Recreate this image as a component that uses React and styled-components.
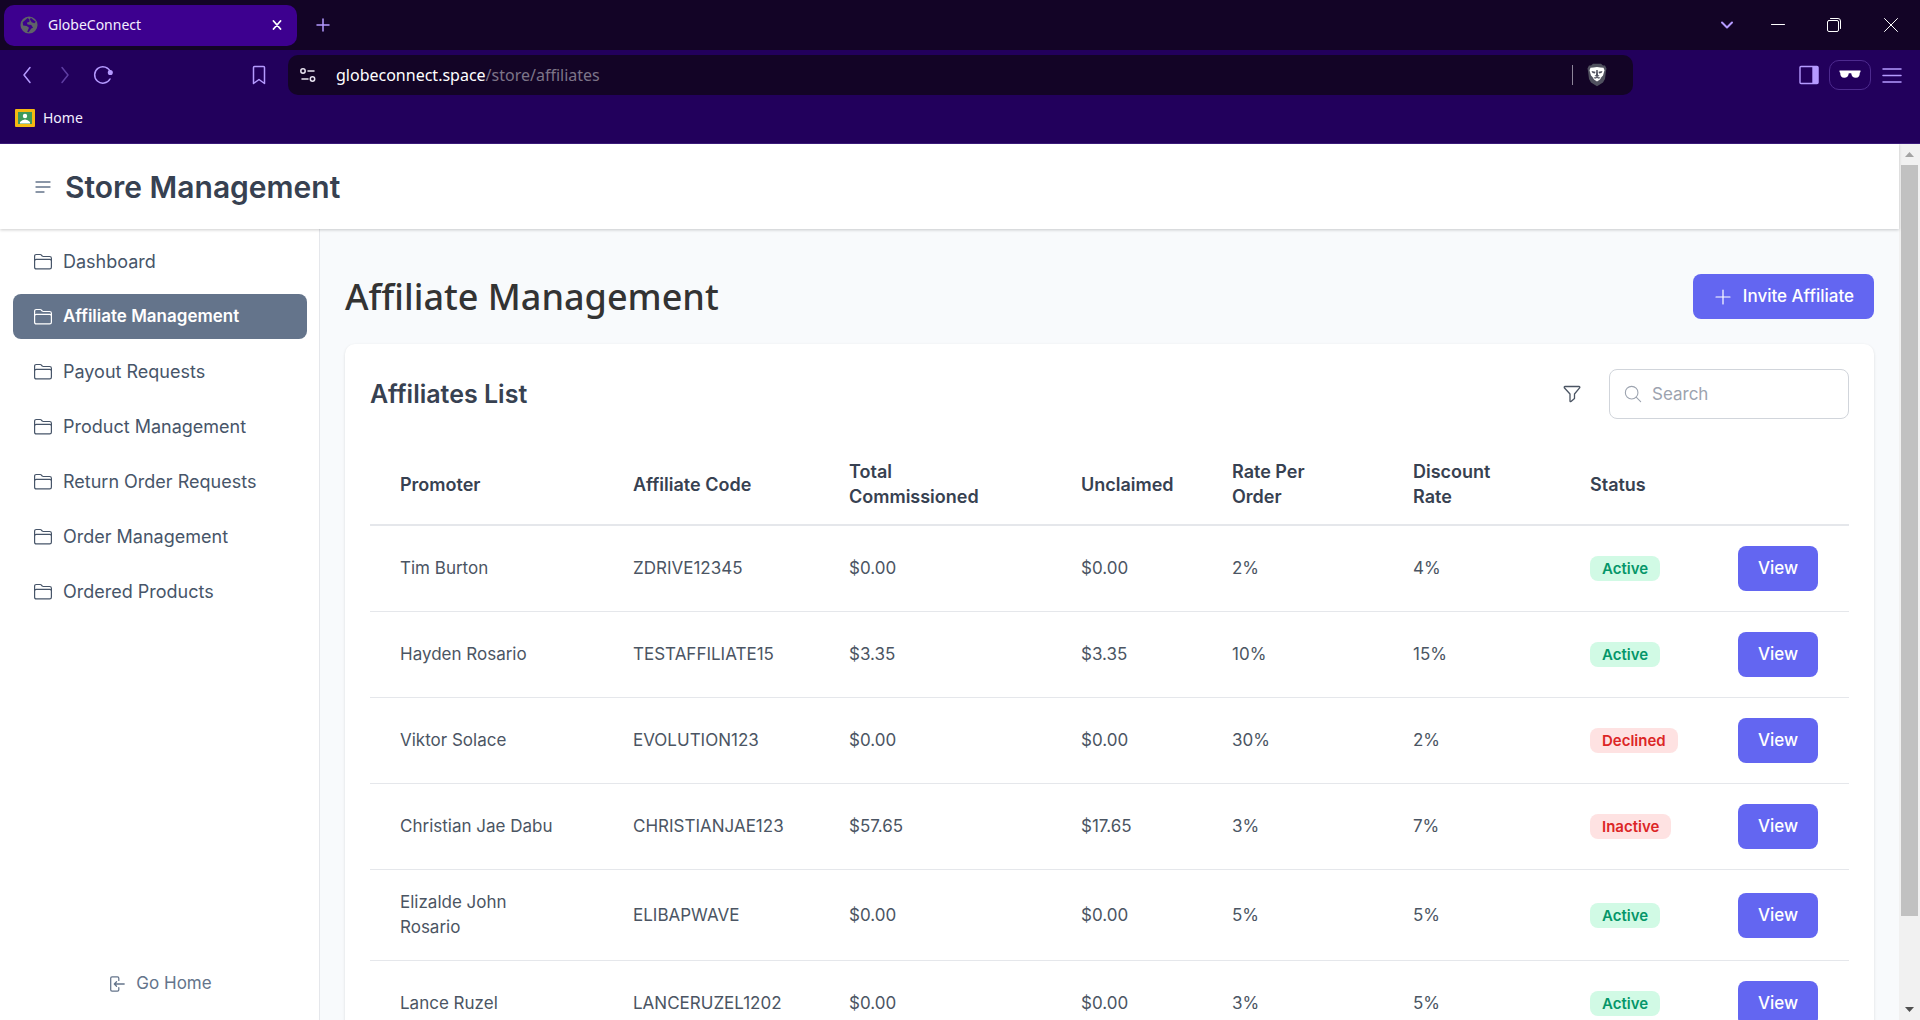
import React from "react";
import styled, { createGlobalStyle, css } from "styled-components";

const GlobalStyle = createGlobalStyle`
  *, *::before, *::after { box-sizing: border-box; }
  body {
    margin: 0;
    font-family: Inter, "Liberation Sans", sans-serif;
    font-size: 17px;
    line-height: 25px;
    color: #4b5563;
  }
  button, input { font: inherit; margin: 0; }
  button { cursor: pointer; }
  h1, h2, ul { margin: 0; padding: 0; }
`;

const Window = styled.div`
  display: flex;
  flex-direction: column;
  height: 100vh;
  overflow: hidden;
`;

const Chrome = styled.header`
  flex: none;
  background: #22005c;
  border-bottom: 1px solid #3c1b7c;
  font-family: "Noto Sans", "Open Sans", sans-serif;
  font-size: 14px;
  line-height: 20px;
  color: #f3eeff;
`;

const TabStrip = styled.div`
  display: flex;
  align-items: center;
  height: 50px;
  padding-left: 4px;
  background: #130426;
`;

const Tab = styled.div`
  display: flex;
  align-items: center;
  gap: 10px;
  width: 293px;
  height: 41px;
  padding: 0 6px 0 16px;
  border-radius: 10px;
  background: #3d008f;
`;

const TabTitle = styled.span`
  flex: 1;
`;

const IconButton = styled.button`
  display: flex;
  align-items: center;
  justify-content: center;
  flex: none;
  width: ${(p) => p.$width || 28}px;
  height: 36px;
  padding: 0;
  border: 0;
  background: none;
  color: ${(p) => p.$color || "#b59aff"};
`;

const Spacer = styled.div`
  flex: 1;
`;

const Toolbar = styled.div`
  display: flex;
  align-items: center;
  height: 50px;
  padding: 0 8px;
`;

const NavButtons = styled.div`
  display: flex;
  flex: none;
  width: 237px;
`;

const AddressBar = styled.div`
  display: flex;
  align-items: center;
  flex: 0 1 1345px;
  height: 40px;
  margin-left: 15px;
  padding: 0 22px 0 4px;
  border-radius: 10px;
  background: #130426;
`;

const UrlText = styled.a`
  flex: 1;
  margin-left: 12px;
  font-size: 16px;
  color: #fff;
  text-decoration: none;

  span { color: #7d7488; }
`;

const Divider = styled.span`
  width: 1px;
  height: 20px;
  margin-right: 10px;
  background: #8d8599;
`;

const ProfileButton = styled(IconButton)`
  width: 42px;
  height: 30px;
  border: 1px solid #4d2a8f;
  border-radius: 10px;
  color: #fff;
`;

const Bookmarks = styled.nav`
  display: flex;
  align-items: center;
  height: 43px;
  padding: 0 15px 8px;
`;

const BookmarkLink = styled.a`
  display: flex;
  align-items: center;
  gap: 8px;
  color: inherit;
  text-decoration: none;
`;

const Viewport = styled.div`
  display: flex;
  flex: 1;
  min-height: 0;
`;

const Page = styled.div`
  display: flex;
  flex-direction: column;
  flex: 1;
  min-width: 0;
`;

const PageHeader = styled.header`
  position: relative;
  z-index: 1;
  display: flex;
  align-items: center;
  flex: none;
  gap: 8px;
  height: 85px;
  padding: 0 29px;
  background: #fff;
  box-shadow: 0 1px 3px rgba(0, 0, 0, 0.2);
`;

const Brand = styled.span`
  font-size: 30px;
  line-height: 40px;
  font-weight: 600;
  color: #374151;
`;

const Body = styled.div`
  display: flex;
  flex: 1;
  min-height: 0;
`;

const Sidebar = styled.nav`
  display: flex;
  flex-direction: column;
  justify-content: space-between;
  flex: none;
  width: 320px;
  padding: 10px 12px 14px 13px;
  border-right: 1px solid #e5e7eb;
  background: #fff;
`;

const NavList = styled.ul`
  display: flex;
  flex-direction: column;
  gap: 10px;
  list-style: none;
`;

const NavLink = styled.a`
  display: flex;
  align-items: center;
  gap: 10px;
  height: 45px;
  padding: 0 20px;
  border-radius: 8px;
  font-size: 18px;
  color: #475569;
  text-decoration: none;

  ${(p) =>
    p.$active &&
    css`
      background: #64748b;
      color: #fff;
      font-size: 17px;
      font-weight: 600;
    `}
`;

const HomeLink = styled(NavLink)`
  justify-content: center;
  font-size: 17px;
  color: #64748b;
`;

const Main = styled.main`
  display: flex;
  flex-direction: column;
  flex: 1;
  min-width: 0;
  gap: 25px;
  padding: 45px 25px 0;
  background: #f8fafc;
  overflow: hidden;
`;

const TitleRow = styled.div`
  display: flex;
  align-items: center;
  justify-content: space-between;
`;

const Title = styled.h1`
  font-family: "Noto Sans", "Open Sans", sans-serif;
  font-size: 36px;
  line-height: 45px;
  font-weight: 500;
  color: #333;
`;

const Button = styled.button`
  display: flex;
  align-items: center;
  justify-content: center;
  gap: 10px;
  height: 45px;
  padding: 0 20px;
  border: 0;
  border-radius: 8px;
  background: #6366f1;
  color: #fff;
  font-weight: 500;
`;

const Card = styled.section`
  flex: none;
  padding: 25px;
  border-radius: 10px;
  background: #fff;
  box-shadow: 0 1px 3px rgba(0, 0, 0, 0.12);
`;

const CardHeader = styled.div`
  display: flex;
  align-items: center;
  margin-bottom: 25px;
`;

const CardTitle = styled.h2`
  flex: 1;
  font-size: 25px;
  line-height: 35px;
  font-weight: 600;
  color: #374151;
`;

const FilterButton = styled(IconButton)`
  margin-right: 23px;
`;

const SearchBox = styled.label`
  display: flex;
  align-items: center;
  gap: 10px;
  width: 240px;
  height: 50px;
  padding: 0 14px;
  border: 1px solid #d1d5db;
  border-radius: 8px;
  color: #9ca3af;
`;

const SearchInput = styled.input`
  flex: 1;
  min-width: 0;
  padding: 0;
  border: 0;
  outline: 0;
  background: none;
  color: #4b5563;

  &::placeholder { color: #9ca3af; opacity: 1; }
`;

const Table = styled.table`
  width: 100%;
  table-layout: fixed;
  border-collapse: separate;
  border-spacing: 0;
  text-align: left;
`;

const Th = styled.th`
  height: 82px;
  padding: 0 30px;
  border-bottom: 2px solid #e5e7eb;
  font-size: 18px;
  font-weight: 600;
  color: #374151;
`;

const Td = styled.td`
  height: 86px;
  padding: 20px 40px 20px 30px;
  border-bottom: 1px solid #e5e7eb;
`;

const Badge = styled.span`
  display: inline-block;
  padding: 0 12px;
  border-radius: 8px;
  font-size: 15px;
  line-height: 25px;
  font-weight: 600;
  background: ${(p) => (p.$good ? "#d1fae5" : "#fee2e2")};
  color: ${(p) => (p.$good ? "#059669" : "#dc2626")};
`;

const ActionTd = styled(Td)`
  padding: 20px 30px;
`;

const Scrollbar = styled.div`
  display: flex;
  flex-direction: column;
  align-items: center;
  flex: none;
  width: 21px;
  background: #f1f1f1;
`;

const ScrollArrow = styled(IconButton)`
  width: 21px;
  height: 21px;
`;

const ScrollTrack = styled.div`
  flex: 1;
  width: 17px;
`;

const ScrollThumb = styled.div`
  height: 90%;
  background: #c1c1c1;
`;

const Glyph = styled.svg`
  flex: none;
  fill: none;
  stroke: currentColor;
  stroke-linecap: round;
  stroke-linejoin: round;
`;

function Icon({ size = 20, box = 20, stroke = 1.5, children }) {
  return (
    <Glyph
      width={size}
      height={size}
      viewBox={`0 0 ${box} ${box}`}
      strokeWidth={stroke}
      aria-hidden="true"
    >
      {children}
    </Glyph>
  );
}

const FolderIcon = () => (
  <Icon stroke={1.2}>
    <path d="M1.600 15.200V4.200q0-1.700 1.700-1.700h3.900q.7 0 1.100.5l.9 1q.4.500 1.100.500h6.300q1.800 0 1.800 1.800v8.900q0 1.700-1.700 1.700H3.300q-1.700 0-1.700-1.700zM1.700 8.600q.2-1.200 1.500-1.200h13.600q1.400 0 1.500 1.200" />
  </Icon>
);

const columns = [
  ["Promoter", 233],
  ["Affiliate Code", 216],
  ["Total Commissioned", 232],
  ["Unclaimed", 151],
  ["Rate Per Order", 181],
  ["Discount Rate", 177],
  ["Status", 148],
  ["", 141],
];

const affiliates = [
  ["Tim Burton", "ZDRIVE12345", "$0.00", "$0.00", "2%", "4%", "Active"],
  ["Hayden Rosario", "TESTAFFILIATE15", "$3.35", "$3.35", "10%", "15%", "Active"],
  ["Viktor Solace", "EVOLUTION123", "$0.00", "$0.00", "30%", "2%", "Declined"],
  ["Christian Jae Dabu", "CHRISTIANJAE123", "$57.65", "$17.65", "3%", "7%", "Inactive"],
  ["Elizalde John Rosario", "ELIBAPWAVE", "$0.00", "$0.00", "5%", "5%", "Active"],
  ["Lance Ruzel", "LANCERUZEL1202", "$0.00", "$0.00", "3%", "5%", "Active"],
];

const navItems = [
  "Dashboard",
  "Affiliate Management",
  "Payout Requests",
  "Product Management",
  "Return Order Requests",
  "Order Management",
  "Ordered Products",
];

function BrowserChrome() {
  return (
    <Chrome>
      <TabStrip>
        <Tab>
          <Icon size={18} stroke={0}>
            <circle cx="10" cy="10" r="9.5" fill="#5f6368" />
            <path d="M8.500 2.200 3 7l.5 3.500 4 .5 2.500 2-2 4.500 1.500.5 3-4 2-1-2-3-4-.5-1-2 3-1V4zM12 2l-1 2 2 3 3 1 1.500-1.500z" fill="#3d008f" />
          </Icon>
          <TabTitle>GlobeConnect</TabTitle>
          <IconButton aria-label="Close tab" $color="#fff">
            <Icon size={10} box={10} stroke={1.8}><path d="M1.500 1l7 8M8.500 1l-7 8" /></Icon>
          </IconButton>
        </Tab>
        <IconButton aria-label="New tab" $width={52}>
          <Icon size={14} box={14}><path d="M7 1v12M1 7h12" /></Icon>
        </IconButton>
        <Spacer />
        <IconButton aria-label="Search tabs" $width={46}>
          <Icon size={14} box={14} stroke={2}><path d="M2 4.500l5 5 5-5" /></Icon>
        </IconButton>
        <IconButton aria-label="Minimize" $width={56} $color="#fff">
          <Icon size={14} box={14} stroke={1}><path d="M.5 6.500h13" /></Icon>
        </IconButton>
        <IconButton aria-label="Restore" $width={56} $color="#fff">
          <Icon size={14} box={14} stroke={1}><path d="M3.500.5H11q2.500 0 2.500 2.500v7.500" /><rect x=".5" y="2.500" width="11" height="11" rx="1.500" /></Icon>
        </IconButton>
        <IconButton aria-label="Close window" $width={58} $color="#fff">
          <Icon size={14} box={14} stroke={1}><path d="M.5.5l13 13M13.500.5l-13 13" /></Icon>
        </IconButton>
      </TabStrip>
      <Toolbar>
        <NavButtons>
          <IconButton aria-label="Back" $width={38}>
            <Icon><path d="M13 2.500 7 10l6 7.500" /></Icon>
          </IconButton>
          <IconButton aria-label="Forward" $width={38} $color="#5e3da3">
            <Icon><path d="M7 2.500 13 10l-6 7.500" /></Icon>
          </IconButton>
          <IconButton aria-label="Reload" $width={38}>
            <Icon><path d="M17.500 7A8.200 8.200 0 1 0 17 14" /><circle cx="17.300" cy="7.500" r="1.800" fill="currentColor" /></Icon>
          </IconButton>
        </NavButtons>
        <IconButton aria-label="Bookmark this page">
          <Icon><path d="M4.500 2.500q0-1 1-1h9q1 0 1 1v16L10 14.500l-5.500 4z" /></Icon>
        </IconButton>
        <AddressBar>
          <IconButton aria-label="Site information" $width={32} $color="#e8e3f0">
            <Icon><circle cx="5" cy="6" r="2.200" /><path d="M10 6h6M4 14h6" /><circle cx="14.500" cy="14" r="2.200" /></Icon>
          </IconButton>
          <UrlText href="#">globeconnect.space<span>/store/affiliates</span></UrlText>
          <Divider />
          <IconButton aria-label="Shields" $color="#fff">
            <Icon size={24} box={24} stroke={0}>
              <path d="M8 .8h8l2 1.700h2l1.500 3L21 8l-1 8-2 3.500-6 3.700-6-3.700L4 16 3 8l-.5-2.500L4 2.500h2z" fill="#50515f" />
              <path d="M8.500 4.500 12 4l3.500.5 3 .2 1 2.600-1.500 5.200-1.500 1.500-1.500 2.500-3 2-3-2L7.500 14 6 12.500 4.500 7.300l1-2.600z" fill="#fff" />
              <path d="M6.500 8l4 .8-.5 1.700-2.500-.5zM17.500 8l-4 .8.5 1.700 2.500-.5zM11.300 7h1.400l.3 5 1.500.8-2.500 1.200-2.500-1.200 1.500-.8zM8.500 14.500 12 14l3.500.5-1.500 1.300-2-.8-2 .8z" fill="#50515f" />
            </Icon>
          </IconButton>
        </AddressBar>
        <Spacer />
        <IconButton aria-label="Toggle sidebar" $width={40}>
          <Icon stroke={1.4}><rect x="1" y="1.500" width="18" height="17" rx="1" /><path d="M14 2h4.500v16H14z" fill="currentColor" /></Icon>
        </IconButton>
        <ProfileButton aria-label="Private profile">
          <Icon size={22} box={22} stroke={0}>
            <path d="M.5 6.500h21v1.500l-.7.7q0 5-4 5-4 0-4.600-4.500h-2.400Q9.200 13.700 5.200 13.700q-4 0-4-5L.5 8z" fill="#fff" />
          </Icon>
        </ProfileButton>
        <IconButton aria-label="Menu" $width={41}>
          <Icon><path d="M1 4h18M1 10.500h18M1 17h18" /></Icon>
        </IconButton>
      </Toolbar>
      <Bookmarks>
        <BookmarkLink href="#">
          <Icon size={20} stroke={0}>
            <rect y="1" width="20" height="18" rx="1" fill="#f4b912" />
            <rect x="3" y="4" width="14" height="12" fill="#3f9a5b" />
            <circle cx="10" cy="8" r="2.200" fill="#fff" />
            <path d="M5 15.500V14q2-2.500 5-2.500t5 2.500v1.500z" fill="#fff" />
          </Icon>
          Home
        </BookmarkLink>
      </Bookmarks>
    </Chrome>
  );
}

export default function App() {
  return (
    <Window>
      <GlobalStyle />
      <BrowserChrome />
      <Viewport>
        <Page>
          <PageHeader>
            <IconButton aria-label="Toggle menu" $color="#64748b">
              <Icon stroke={1.3}><path d="M3 5h14M3 10h14M3 15h8" /></Icon>
            </IconButton>
            <Brand>Store Management</Brand>
          </PageHeader>
          <Body>
            <Sidebar>
              <NavList>
                {navItems.map((label) => (
                  <li key={label}>
                    <NavLink href="#" $active={label === "Affiliate Management"}>
                      <FolderIcon />
                      {label}
                    </NavLink>
                  </li>
                ))}
              </NavList>
              <HomeLink href="#">
                <Icon size={18} stroke={1.4}>
                  <path d="M12 6V3.500q0-1.500-1.500-1.500h-6Q3 2 3 3.500v13Q3 18 4.500 18h6q1.500 0 1.500-1.500V14M18 10H7M9.500 7.500 7 10l2.500 2.500" />
                </Icon>
                Go Home
              </HomeLink>
            </Sidebar>
            <Main>
              <TitleRow>
                <Title>Affiliate Management</Title>
                <Button>
                  <Icon stroke={1.2}><path d="M10 3v14M3 10h14" /></Icon>
                  Invite Affiliate
                </Button>
              </TitleRow>
              <Card>
                <CardHeader>
                  <CardTitle>Affiliates List</CardTitle>
                  <FilterButton aria-label="Filter" $color="#4b5563">
                    <Icon stroke={1.3}><path d="M3 2.500h14q1 0 .8 1.200L12.500 10v4.500L9 17.500q-1 .5-1-.5v-7L2.300 3.700Q2 2.500 3 2.500z" /></Icon>
                  </FilterButton>
                  <SearchBox>
                    <Icon size={18} stroke={1.2}><circle cx="8.500" cy="8.500" r="7" /><path d="M13.500 13.500 18.500 18.500" /></Icon>
                    <SearchInput type="text" placeholder="Search" aria-label="Search" />
                  </SearchBox>
                </CardHeader>
                <Table>
                  <colgroup>
                    {columns.map(([name, width]) => (
                      <col key={name} width={width} />
                    ))}
                  </colgroup>
                  <thead>
                    <tr>
                      {columns.map(([name]) => (
                        <Th key={name}>{name}</Th>
                      ))}
                    </tr>
                  </thead>
                  <tbody>
                    {affiliates.map((row) => (
                      <tr key={row[0]}>
                        {row.slice(0, 6).map((value, i) => (
                          <Td key={i}>{value}</Td>
                        ))}
                        <Td>
                          <Badge $good={row[6] === "Active"}>{row[6]}</Badge>
                        </Td>
                        <ActionTd>
                          <Button>View</Button>
                        </ActionTd>
                      </tr>
                    ))}
                  </tbody>
                </Table>
              </Card>
            </Main>
          </Body>
        </Page>
        <Scrollbar>
          <ScrollArrow aria-label="Scroll up" $color="#a3a3a3">
            <Icon size={9} box={9} stroke={0}><path d="M0 7 4.500 2 9 7z" fill="currentColor" /></Icon>
          </ScrollArrow>
          <ScrollTrack>
            <ScrollThumb />
          </ScrollTrack>
          <ScrollArrow aria-label="Scroll down" $color="#505050">
            <Icon size={9} box={9} stroke={0}><path d="M0 2 4.500 7 9 2z" fill="currentColor" /></Icon>
          </ScrollArrow>
        </Scrollbar>
      </Viewport>
    </Window>
  );
}
